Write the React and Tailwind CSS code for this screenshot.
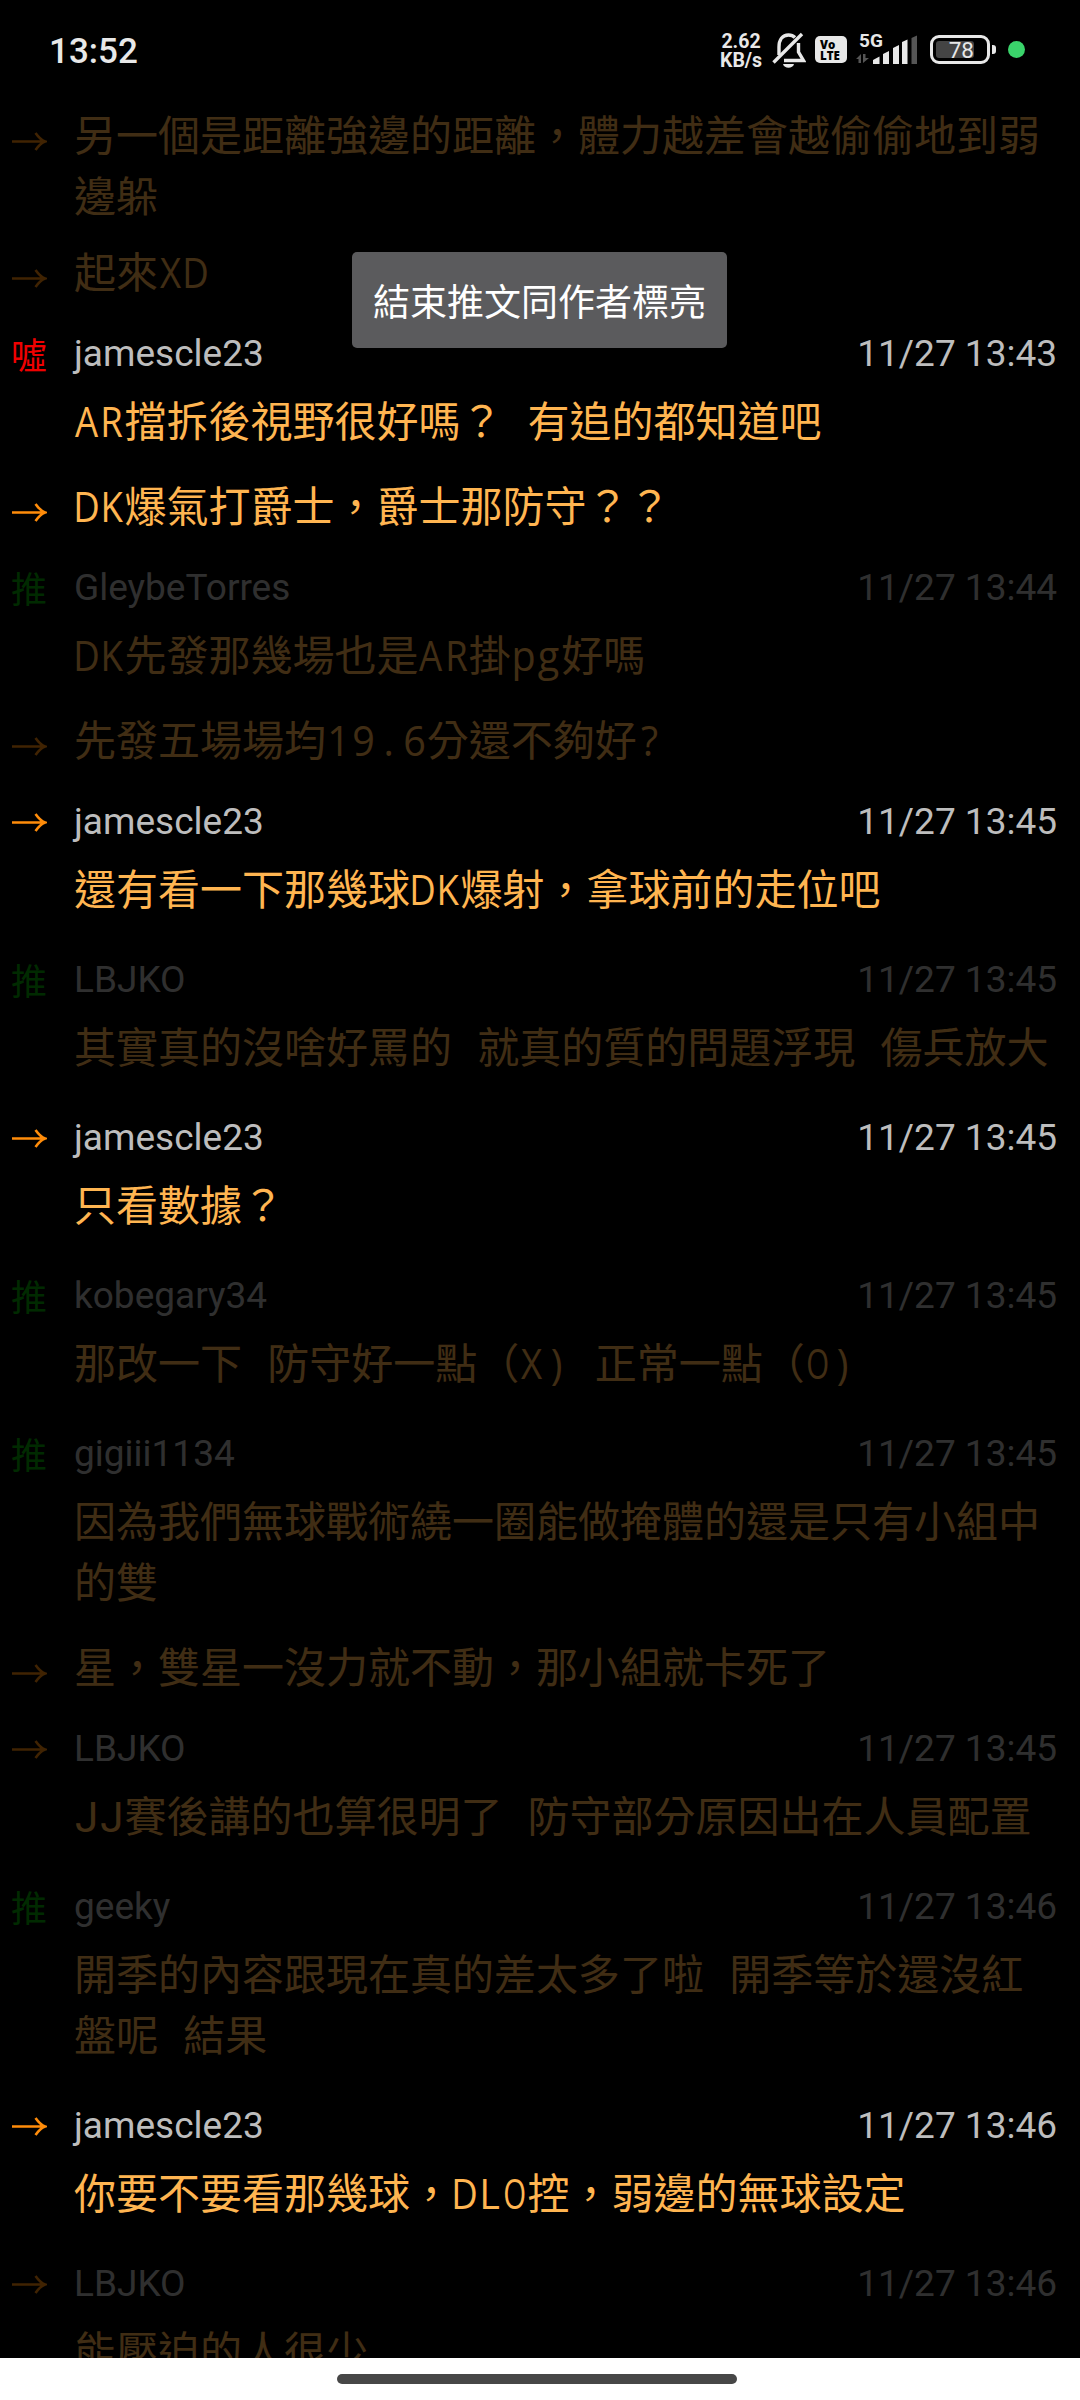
import React from "react";

const COMMENTS = [
  { mark: "→", text: "另一個是距離強邊的距離，體力越差會越偷偷地到弱邊躲" },
  { mark: "→", text: "起來XD" },
  { mark: "噓", user: "jamescle23", date: "11/27 13:43", on: true, text: "AR擋拆後視野很好嗎？ 有追的都知道吧" },
  { mark: "→", on: true, text: "DK爆氣打爵士，爵士那防守？？" },
  { mark: "推", user: "GleybeTorres", date: "11/27 13:44", text: "DK先發那幾場也是AR掛pg好嗎" },
  { mark: "→", text: "先發五場場均19.6分還不夠好?" },
  { mark: "→", user: "jamescle23", date: "11/27 13:45", on: true, text: "還有看一下那幾球DK爆射，拿球前的走位吧" },
  { mark: "推", user: "LBJKO", date: "11/27 13:45", text: "其實真的沒啥好罵的 就真的質的問題浮現 傷兵放大" },
  { mark: "→", user: "jamescle23", date: "11/27 13:45", on: true, text: "只看數據？" },
  { mark: "推", user: "kobegary34", date: "11/27 13:45", text: "那改一下 防守好一點（X) 正常一點（O)" },
  { mark: "推", user: "gigiii1134", date: "11/27 13:45", text: "因為我們無球戰術繞一圈能做掩體的還是只有小組中的雙" },
  { mark: "→", text: "星，雙星一沒力就不動，那小組就卡死了" },
  { mark: "→", user: "LBJKO", date: "11/27 13:45", text: "JJ賽後講的也算很明了 防守部分原因出在人員配置" },
  { mark: "推", user: "geeky", date: "11/27 13:46", text: "開季的內容跟現在真的差太多了啦 開季等於還沒紅盤呢 結果" },
  { mark: "→", user: "jamescle23", date: "11/27 13:46", on: true, text: "你要不要看那幾球，DLO控，弱邊的無球設定" },
  { mark: "→", user: "LBJKO", date: "11/27 13:46", text: "能壓迫的人很少" },
];

function Mark({ kind }) {
  if (kind === "→") {
    return (
      <svg width="36" height="22" viewBox="0 0 36 22" fill="none" stroke="#ff8c0a" strokeWidth="2.6">
        <path d="M1 11.500H33.500M24.500 3C27 6.500 30 10 34 11.500C30 13 27 16.500 24.500 20" />
      </svg>
    );
  }
  return (
    <span className={kind === "噓" ? "pb-[2px] text-[#f00000]" : "pb-[2px] text-[#00a800]"}>{kind}</span>
  );
}

// Wide capitals are condensed so that they fit a half-width cell.
function cellFont(c) {
  if (c === "J") return "font-['Roboto',sans-serif]";
  if (c === "O") return "font-['Open_Sans',sans-serif] scale-x-[0.7]";
  if ("DAKRX".includes(c)) return "font-['Open_Sans',sans-serif] scale-x-[0.87]";
  return "font-['Open_Sans',sans-serif] scale-x-[0.94]";
}

// Half-width characters sit in 25px cells so that they line up as monospaced text.
function Body({ text }) {
  return text.split(/([\x21-\x7e]+)/).map((run, i) =>
    /^[\x21-\x7e]/.test(run) ? (
      <span key={i}>
        {[...run].map((c, j) => (
          <span key={j} className={`inline-flex w-[25.2px] justify-center leading-none ${cellFont(c)}`}>
            {c}
          </span>
        ))}
      </span>
    ) : (
      run
    )
  );
}

function Comment({ mark, user, date, text, on }) {
  return (
    <div className={`flex shrink-0 items-start ${on ? "" : "opacity-25"}`}>
      <div className="flex h-[70px] w-[74px] shrink-0 items-center pl-[11px] text-[36px] leading-none">
        <Mark kind={mark} />
      </div>
      <div className={user ? "w-[988px] pb-[28px]" : "-mt-[4px] w-[988px] pb-[19px]"}>
        {user && (
          <div className="flex h-[69px] w-[983px] items-center justify-between pb-[1px] font-['Roboto',sans-serif] text-[37px] leading-none text-[#bdbdbd]">
            <span>{user}</span>
            <span>{date}</span>
          </div>
        )}
        <p className="text-[42px] leading-[61px] break-all text-[#ffb551] [word-spacing:15.8px]">
          <Body text={text} />
        </p>
      </div>
    </div>
  );
}

function StatusBar() {
  return (
    <header className="flex h-[106px] shrink-0 items-start justify-between pr-[55px] pl-[49px] font-['Roboto',sans-serif] text-[#e8e8e8]">
      <span className="pt-[32px] text-[35px] leading-[40px] font-medium">13:52</span>
      <div className="flex items-start pt-[31px]">
        <div className="mt-[2px] w-[42px] text-center text-[19.5px] leading-[18.5px] font-bold">
          <div>2.62</div>
          <div>KB/s</div>
        </div>
        <svg className="ml-[10px]" width="34" height="38" viewBox="0 0 34 38" fill="none" stroke="#e8e8e8" strokeWidth="3.4">
          <path d="M1.500 31.500L30 3" />
          <path d="M7 24V16C7 9 10.500 4 16.500 4C19 4 21.500 5 23 6.500M26.500 12V21L31.500 29.500H12" />
          <path d="M11 33H22C21 38 12 38 11 33Z" fill="#e8e8e8" stroke="none" />
        </svg>
        <div className="mt-[5px] mr-[1px] ml-[9px] flex h-[27px] w-[32px] flex-col justify-center rounded-[5px] bg-[#e8e8e8] pl-[5px] font-['Open_Sans',sans-serif] text-[11.5px] leading-[11px] font-extrabold text-black">
          <span>Vo</span>
          <span>LTE</span>
        </div>
        <div className="relative ml-[8px] h-[34px] w-[62px]">
          <svg width="62" height="34" viewBox="0 0 62 34" fill="#e8e8e8">
            <path d="M0 28L5 23V32H2.500V28ZM7 23H9.500V27H13L7 32Z" fill="#555" />
            <path d="M17 33V29L23.500 25.500V33ZM27 33V23L33 20V33ZM37 33V17L43 14V33ZM46 33V11L51.500 8.500V33Z" />
            <path d="M55.500 33V7L61 4.500V33Z" fill="#555" />
          </svg>
          <span className="absolute top-0 left-[3px] text-[19px] leading-[19px] font-bold">5G</span>
        </div>
        <div className="mt-[4px] ml-[12px] flex h-[29px] w-[60px] items-center rounded-[9px] border-[3px] border-[#e8e8e8] p-[3px]">
          <div className="flex h-[17px] w-[38px] items-center justify-end rounded-[3px] bg-[#444] pt-[2px] text-[22.5px] leading-none">78</div>
        </div>
        <div className="mt-[14px] ml-[2px] h-[9px] w-[4px] rounded-r-[3px] bg-[#e8e8e8]" />
        <div className="mt-[10px] ml-[12px] h-[17px] w-[17px] rounded-full bg-[#3ad46b]" />
      </div>
    </header>
  );
}

export default function App() {
  return (
    <div
      lang="zh-TW"
      className="relative flex h-[2400px] w-[1080px] flex-col overflow-hidden bg-black font-['Noto_Sans_CJK_TC',sans-serif]"
    >
      <StatusBar />
      <main className="-mt-[10px] flex min-h-0 flex-1 flex-col overflow-hidden pt-[10px]">
        {COMMENTS.map((c, i) => (
          <Comment key={i} {...c} />
        ))}
      </main>
      <div className="flex h-[42px] shrink-0 justify-center bg-white pt-[16px] pr-[7px]">
        <div className="h-[10px] w-[400px] rounded-[5px] bg-[#474747]" />
      </div>
      <div className="absolute top-[252px] left-[352px] flex h-[96px] w-[375px] items-center justify-center rounded-[5px] bg-[#5b5b5d] text-[37px] leading-none whitespace-nowrap text-white">
        結束推文同作者標亮
      </div>
    </div>
  );
}
